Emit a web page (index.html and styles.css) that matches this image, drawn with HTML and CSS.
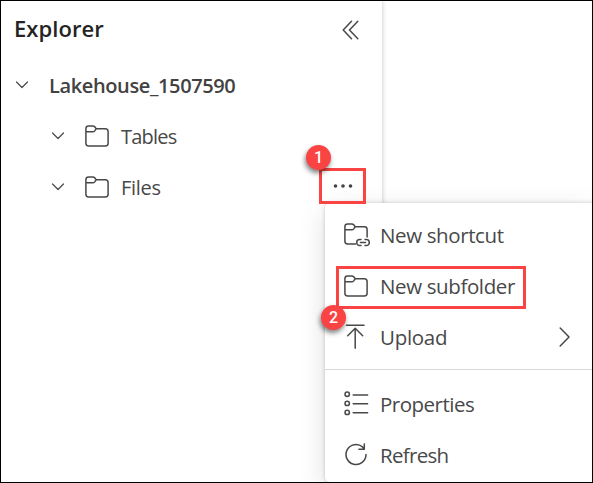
FILE: index.html
```html
<!DOCTYPE html>
<html lang="en">
<head>
<meta charset="utf-8">
<title>Explorer</title>
<link rel="stylesheet" href="styles.css">
</head>
<body>
<svg width="0" height="0" class="defs">
  <symbol id="folder" viewBox="0 0 24 22"><path d="M.9 3.600V18.200q0 2.700 2.700 2.700H20.400q2.700 0 2.700-2.700V6.500q0-2.700-2.700-2.700H11.200L9.700 1.800Q9 .9 7.800.9H3.600Q.9.9.9 3.600M.9 6.800H7.800q1.200 0 1.900-.9L11.200 3.800"/></symbol>
  <symbol id="chevron" viewBox="0 0 12 8"><path d="M.5 1 6 6.500 11.500 1"/></symbol>
</svg>
<div class="frame">
  <aside class="explorer">
    <header class="head">
      <h1 class="title">Explorer</h1>
      <svg class="icon collapse" width="18" height="20" viewBox="0 0 18 20"><path d="M9.500 1.200 1.200 10 9.500 18.800M15.800 1.200 7.500 10l8.300 8.800"/></svg>
    </header>
    <div class="node root"><svg class="icon chev"><use href="#chevron"/></svg><span class="root-name">Lakehouse_1507590</span></div>
    <div class="node child"><svg class="icon chev"><use href="#chevron"/></svg><svg class="icon folder"><use href="#folder"/></svg><span class="tables">Tables</span></div>
    <div class="node child"><svg class="icon chev"><use href="#chevron"/></svg><svg class="icon folder"><use href="#folder"/></svg><span class="files">Files</span>
      <svg class="dots" width="20" height="4" viewBox="0 0 20 4"><circle cx="2.500" cy="2" r="1.800"/><circle cx="10" cy="2" r="1.800"/><circle cx="17.500" cy="2" r="1.800"/></svg>
    </div>
  </aside>
  <nav class="menu">
    <div class="item"><svg class="icon glyph" width="26" height="24" viewBox="0 0 26 24"><path d="M11.500 20.900H3.600Q.9 20.900.9 18.200V3.600Q.9.900 3.600.9H7.800Q9 .9 9.700 1.800L11.200 3.800H20.400q2.700 0 2.700 2.700V14M.9 6.800H7.800q1.200 0 1.900-.9L11.200 3.800"/><path d="M17 16.600h-1.300a3 3 0 0 0 0 6H17M21 16.600h1.300a3 3 0 0 1 0 6H21M16.500 19.600h5"/></svg><span class="shortcut">New shortcut</span></div>
    <div class="item"><svg class="icon glyph folder"><use href="#folder"/></svg><span class="subfolder">New subfolder</span></div>
    <div class="item"><svg class="icon glyph" width="24" height="25" viewBox="0 0 24 25"><path d="M2.500 1.300h17.500M11.200 24.200V4.200M3.700 11.700l7.500-7.500 7.500 7.500"/></svg><span class="upload">Upload</span><svg class="icon more" width="12" height="20" viewBox="0 0 12 20"><path d="m1.200 1 8.800 9-8.800 9"/></svg></div>
    <hr class="rule">
    <div class="item"><svg class="icon glyph" width="25" height="26" viewBox="0 0 25 26"><circle cx="3.200" cy="3.300" r="2.200"/><circle cx="3.200" cy="12.400" r="2.200"/><circle cx="3.200" cy="21.400" r="2.200"/><path d="M9.200 3.900h14.400M9.200 12.800h14.400M9.200 21.800h14.400"/></svg><span class="properties">Properties</span></div>
    <div class="item"><svg class="icon glyph" width="24" height="24" viewBox="0 0 24 24"><path d="M18.600 4A10 10 0 1 0 22 11.500M20.300.9v5.300h-5.400M20.300 6 18 3.500"/></svg><span class="refresh">Refresh</span></div>
  </nav>
  <div class="mark mark-more"></div>
  <div class="mark mark-subfolder"></div>
  <div class="badge badge-one">1</div>
  <div class="badge badge-two">2</div>
</div>
</body>
</html>
```
FILE: styles.css
```css
* { box-sizing: border-box; }
body { margin: 0; background: #fff; font-family: "Open Sans", "Noto Sans", sans-serif; color: #484848; }
.defs { position: absolute; }
.frame { position: relative; width: 593px; height: 483px; border: 1px solid #000; overflow: hidden; background: #fff; }
.explorer { width: 381px; height: 481px; background: #fff; box-shadow: 0 0 5px rgba(0,0,0,.23); }
.head { display: flex; align-items: center; justify-content: space-between; height: 58px; padding: 0 22px 4px 13px; }
.title { margin: 0; font-size: 22px; font-weight: 600; letter-spacing: .05px; color: #242424; }
.collapse { margin-top: 3px; }
.icon { flex: none; fill: none; stroke: #484848; stroke-width: 1.500; stroke-linecap: round; stroke-linejoin: round; }
.node { display: flex; align-items: center; height: 51px; font-size: 20px; }
.node span { padding-top: 2px; white-space: nowrap; }
.root { padding-left: 15px; font-weight: 600; color: #424242; }
.child { padding-left: 51px; }
.chev { width: 12px; height: 8px; stroke-width: 1.200; }
.root-name { margin-left: 21px; letter-spacing: -.38px; }
.folder { width: 24px; height: 22px; }
.child .folder { margin-left: 21px; }
.child span { margin-left: 12px; }
.tables { letter-spacing: -.8px; }
.files { letter-spacing: -.3px; }
.dots { margin: 0 29px 2px auto; fill: #424242; }
.menu { position: absolute; left: 324px; top: 202px; width: 272px; height: 279px; padding-top: 6px; border-radius: 5px; background: #fff; box-shadow: 0 8px 28px rgba(0,0,0,.13), 0 0 4px rgba(0,0,0,.18); }
.item { display: flex; align-items: center; height: 51px; padding: 0 26px 0 19px; font-size: 20.500px; }
.item span { white-space: nowrap; letter-spacing: -.38px; }
.item .properties { letter-spacing: -.5px; }
.item .refresh { letter-spacing: -.7px; }
.item .upload { letter-spacing: -.3px; }
.glyph { margin-right: 12px; }
.glyph[width="26"] { margin-right: 10px; }
.glyph[width="25"] { margin-right: 11px; }
.more { margin-left: auto; }
.rule { height: 1px; margin: 7px 0 8px; border: 0; background: #d8d8d8; }
.mark { position: absolute; border: 3px solid #fa4343; }
.mark-more { left: 318px; top: 167px; width: 47px; height: 36px; }
.mark-subfolder { left: 335px; top: 265px; width: 190px; height: 43px; }
.badge { position: absolute; display: flex; align-items: center; justify-content: center; width: 25px; height: 25px; border-radius: 50%; background: #fa4343; color: #fff; font: 500 16px "Roboto", sans-serif; box-shadow: -1px 3px 5px rgba(0,0,0,.5); }
.badge-one { left: 305px; top: 144px; }
.badge-two { left: 320px; top: 304px; }
```
